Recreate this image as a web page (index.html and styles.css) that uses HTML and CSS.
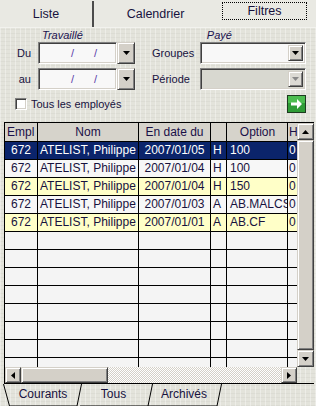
FILE: index.html
```html
<!DOCTYPE html>
<html lang="fr">
<head>
    <meta charset="UTF-8">
    <title>Filtres</title>
    <link rel="stylesheet" href="styles.css">
</head>
<body>
    <div class="tabs">
        <div class="tab tab-liste">Liste</div>
        <div class="tab tab-cal">Calendrier</div>
        <div class="tab tab-filtres"><span class="focus">Filtres</span></div>
    </div>

    <div class="filters">
        <div class="heads">
            <span class="head-work">Travaillé</span>
            <span class="head-paid">Payé</span>
        </div>

        <div class="frow">
            <span class="lbl-left">Du</span>
            <div class="field date"><span class="slash">/</span><span class="slash">/</span></div>
            <div class="btn-drop"><svg width="7" height="4" viewBox="0 0 7 4"><path d="M0 0h7L3.5 4z" fill="#000"/></svg></div>
            <span class="lbl-right">Groupes</span>
            <div class="field combo">
                <div class="btn-drop inner"><svg width="7" height="4" viewBox="0 0 7 4"><path d="M0 0h7L3.5 4z" fill="#000"/></svg></div>
            </div>
        </div>

        <div class="frow">
            <span class="lbl-left">au</span>
            <div class="field date"><span class="slash">/</span><span class="slash">/</span></div>
            <div class="btn-drop"><svg width="7" height="4" viewBox="0 0 7 4"><path d="M0 0h7L3.5 4z" fill="#000"/></svg></div>
            <span class="lbl-right">Période</span>
            <div class="field combo disabled">
                <div class="btn-drop inner"><svg width="7" height="4" viewBox="0 0 7 4"><path d="M0 0h7L3.5 4z" fill="#8a8a8a"/></svg></div>
            </div>
        </div>

        <div class="crow">
            <span class="check"></span>
            <span class="check-text">Tous les employés</span>
            <div class="go">
                <svg width="19" height="18" viewBox="0 0 19 18">
                    <rect x="0.5" y="0.5" width="18" height="17" fill="#2f9c36" stroke="#1d3b1f"/>
                    <rect x="1" y="1" width="17" height="7" fill="#4cbd4f"/>
                    <path d="M4 7.5h6V4l5 5-5 5v-3.5H4z" fill="#fff"/>
                </svg>
            </div>
        </div>
    </div>

    <div class="grid">
        <div class="grid-main">
            <div class="cells">
                <div class="row head">
                    <div class="c c-empl">Empl</div>
                    <div class="c c-nom">Nom</div>
                    <div class="c c-date">En date du</div>
                    <div class="c c-type"></div>
                    <div class="c c-opt">Option</div>
                    <div class="c c-h">H</div>
                </div>
                <div class="row sel">
                    <div class="c c-empl">672</div>
                    <div class="c c-nom">ATELIST, Philippe</div>
                    <div class="c c-date">2007/01/05</div>
                    <div class="c c-type">H</div>
                    <div class="c c-opt">100</div>
                    <div class="c c-h">0</div>
                </div>
                <div class="row">
                    <div class="c c-empl">672</div>
                    <div class="c c-nom">ATELIST, Philippe</div>
                    <div class="c c-date">2007/01/04</div>
                    <div class="c c-type">H</div>
                    <div class="c c-opt">100</div>
                    <div class="c c-h">0</div>
                </div>
                <div class="row alt">
                    <div class="c c-empl">672</div>
                    <div class="c c-nom">ATELIST, Philippe</div>
                    <div class="c c-date">2007/01/04</div>
                    <div class="c c-type">H</div>
                    <div class="c c-opt">150</div>
                    <div class="c c-h">0</div>
                </div>
                <div class="row">
                    <div class="c c-empl">672</div>
                    <div class="c c-nom">ATELIST, Philippe</div>
                    <div class="c c-date">2007/01/03</div>
                    <div class="c c-type">A</div>
                    <div class="c c-opt">AB.MALCS</div>
                    <div class="c c-h">0</div>
                </div>
                <div class="row alt">
                    <div class="c c-empl">672</div>
                    <div class="c c-nom">ATELIST, Philippe</div>
                    <div class="c c-date">2007/01/01</div>
                    <div class="c c-type">A</div>
                    <div class="c c-opt">AB.CF</div>
                    <div class="c c-h">0</div>
                </div>
                <div class="row empty"><div class="c c-empl"></div><div class="c c-nom"></div><div class="c c-date"></div><div class="c c-type"></div><div class="c c-opt"></div><div class="c c-h"></div></div>
                <div class="row empty"><div class="c c-empl"></div><div class="c c-nom"></div><div class="c c-date"></div><div class="c c-type"></div><div class="c c-opt"></div><div class="c c-h"></div></div>
                <div class="row empty"><div class="c c-empl"></div><div class="c c-nom"></div><div class="c c-date"></div><div class="c c-type"></div><div class="c c-opt"></div><div class="c c-h"></div></div>
                <div class="row empty"><div class="c c-empl"></div><div class="c c-nom"></div><div class="c c-date"></div><div class="c c-type"></div><div class="c c-opt"></div><div class="c c-h"></div></div>
                <div class="row empty"><div class="c c-empl"></div><div class="c c-nom"></div><div class="c c-date"></div><div class="c c-type"></div><div class="c c-opt"></div><div class="c c-h"></div></div>
                <div class="row empty"><div class="c c-empl"></div><div class="c c-nom"></div><div class="c c-date"></div><div class="c c-type"></div><div class="c c-opt"></div><div class="c c-h"></div></div>
                <div class="row empty"><div class="c c-empl"></div><div class="c c-nom"></div><div class="c c-date"></div><div class="c c-type"></div><div class="c c-opt"></div><div class="c c-h"></div></div>
                <div class="row empty"><div class="c c-empl"></div><div class="c c-nom"></div><div class="c c-date"></div><div class="c c-type"></div><div class="c c-opt"></div><div class="c c-h"></div></div>
            </div>
            <div class="vscroll">
                <div class="sbtn"><svg width="7" height="4" viewBox="0 0 7 4"><path d="M0 4h7L3.5 0z" fill="#000"/></svg></div>
                <div class="vtrack"></div>
                <div class="sbtn"><svg width="7" height="4" viewBox="0 0 7 4"><path d="M0 0h7L3.5 4z" fill="#000"/></svg></div>
            </div>
        </div>
        <div class="hscroll">
            <div class="hbar">
                <div class="sbtn"><svg width="4" height="7" viewBox="0 0 4 7"><path d="M4 0v7L0 3.5z" fill="#000"/></svg></div>
                <div class="hthumb"></div>
                <div class="htrack"></div>
                <div class="sbtn"><svg width="4" height="7" viewBox="0 0 4 7"><path d="M0 0v7l4-3.5z" fill="#000"/></svg></div>
            </div>
            <div class="corner"></div>
        </div>
    </div>

    <div class="sheets">
        <svg class="sheet-lines" width="316" height="24" viewBox="0 0 316 24">
            <path d="M3.5 0L9.5 22H77L81.5 0" fill="none" stroke="#000"/>
            <path d="M80 22H148L152.5 0" fill="none" stroke="#000"/>
            <path d="M148 22H217L221.5 0" fill="none" stroke="#000"/>
        </svg>
        <span class="sheet s-courants">Courants</span>
        <span class="sheet s-tous">Tous</span>
        <span class="sheet s-archives">Archivés</span>
    </div>
</body>
</html>
```

FILE: styles.css
```css
/* base window */
* {
    box-sizing: border-box;
}

body {
    margin: 0;
    width: 316px;
    height: 406px;
    overflow: hidden;
    font-family: "Liberation Sans", Arial, sans-serif;
    color: #17123e;
    background-color: #e3e3db;
    background-image:
        repeating-linear-gradient(90deg, rgba(255, 255, 255, 0.35) 0 1px, transparent 1px 5px),
        repeating-linear-gradient(0deg, rgba(0, 0, 0, 0.03) 0 1px, transparent 1px 4px);
}

/* top tabs */
.tabs {
    display: flex;
    height: 28px;
    background: #e9e9e3;
    border-bottom: 1px solid #f2f2ee;
}

.tab {
    display: flex;
    align-items: center;
    justify-content: center;
    font-size: 12.5px;
}

.tab-liste {
    width: 94px;
    border-right: 2px solid #4b4b4b;
    margin-top: 1px;
}

.tab-cal {
    width: 123px;
}

.tab-filtres {
    width: 99px;
    justify-content: flex-start;
}

.focus {
    margin-left: 5px;
    width: 85px;
    height: 18px;
    margin-top: -5px;
    border: 1px dotted #000;
    text-align: center;
    line-height: 16px;
    color: #160f3a;
}

/* filters */
.filters {
    height: 91px;
}

.heads {
    height: 14px;
    font-size: 11px;
    font-style: italic;
    line-height: 14px;
    color: #1a1250;
}

.head-work {
    margin-left: 42px;
}

.head-paid {
    margin-left: 121px;
}

.frow {
    display: flex;
    align-items: center;
    height: 22px;
    margin-bottom: 4px;
    font-size: 11px;
}

.lbl-left {
    width: 31px;
    text-align: right;
    margin-right: 7px;
}

.lbl-right {
    width: 48px;
    margin-left: 17px;
}

.field {
    height: 22px;
    background: #f8f8f8;
    border: 1px solid;
    border-color: #808080 #ffffff #ffffff #808080;
    box-shadow: inset 1px 1px 0 #404040, inset -1px -1px 0 #d4d0c8;
}

.date {
    width: 79px;
    display: flex;
    align-items: center;
    padding-left: 32px;
    font-size: 11px;
    color: #5a3aa8;
}

.slash + .slash {
    margin-left: 20px;
}

.btn-drop {
    width: 18px;
    height: 22px;
    display: flex;
    align-items: center;
    justify-content: center;
    background: #d4d0c8;
    border: 1px solid;
    border-color: #d4d0c8 #404040 #404040 #d4d0c8;
    box-shadow: inset 1px 1px 0 #ffffff, inset -1px -1px 0 #808080;
}

.combo {
    width: 106px;
    display: flex;
    justify-content: flex-end;
    padding: 2px;
}

.btn-drop.inner {
    width: 15px;
    height: 16px;
}

.combo.disabled {
    background: #d8d8d0;
}

.combo.disabled .btn-drop {
    background: #dcdad4;
}

.crow {
    display: flex;
    align-items: center;
    height: 19px;
    margin-top: 1px;
    font-size: 11px;
}

.check {
    width: 12px;
    height: 12px;
    margin-left: 15px;
    margin-right: 4px;
    background: #fff;
    border: 1px solid;
    border-color: #808080 #ffffff #ffffff #808080;
    box-shadow: inset 1px 1px 0 #404040, inset -1px -1px 0 #d4d0c8;
}

.check-text {
    flex: 1;
}

.go {
    width: 19px;
    height: 18px;
    margin-right: 10px;
}

.go svg {
    display: block;
}

/* grid */
.grid {
    margin-top: 3px;
    margin-left: 4px;
    width: 310px;
    border-left: 1px solid #000;
    border-top: 1px solid #000;
}

.grid-main {
    display: flex;
    height: 244px;
}

.cells {
    width: 292px;
    overflow: hidden;
    background: #f4f4f4;
}

.row {
    display: grid;
    grid-template-columns: 33px 101px 72px 16px 61px 24px;
    height: 18px;
    border-bottom: 1px solid #000;
    font-size: 12px;
    line-height: 17px;
    background: #f7f7f7;
}

.row.head {
    height: 19px;
    line-height: 18px;
    background: #d6d3cb;
    color: #1a1048;
}

.row.sel {
    background: #0b246b;
    color: #fff;
}

.row.alt {
    background: #ffffc8;
}

.row.empty {
    background: #f4f4f4;
}

.c {
    border-right: 1px solid #000;
    white-space: nowrap;
    overflow: hidden;
    padding: 0 2px;
}

.c-empl {
    text-align: center;
}

.head .c-empl {
    text-align: left;
}

.c-date {
    text-align: center;
}

.head .c-nom,
.head .c-opt {
    text-align: center;
}

.c-opt {
    padding-left: 3px;
    text-overflow: clip;
}

.c-h {
    padding-left: 1px;
}

/* scrollbars */
.vscroll {
    width: 17px;
    display: flex;
    flex-direction: column;
}

.sbtn {
    width: 17px;
    height: 17px;
    flex: none;
    display: flex;
    align-items: center;
    justify-content: center;
    background: #d4d0c8;
    border: 1px solid;
    border-color: #d4d0c8 #404040 #404040 #d4d0c8;
    box-shadow: inset 1px 1px 0 #ffffff, inset -1px -1px 0 #808080;
}

.sbtn svg {
    display: block;
}

.vtrack {
    flex: 1;
    background: #d4d0c8;
    border: 1px solid;
    border-color: #d4d0c8 #404040 #404040 #d4d0c8;
    box-shadow: inset 1px 1px 0 #ffffff, inset -1px -1px 0 #808080;
}

.hscroll {
    display: flex;
    height: 17px;
    border-bottom: 1px solid #000;
}

.hbar {
    width: 292px;
    display: flex;
}

.hbar .sbtn {
    width: 16px;
    height: 16px;
}

.hthumb {
    width: 87px;
    background: #d4d0c8;
    border: 1px solid;
    border-color: #d4d0c8 #404040 #404040 #d4d0c8;
    box-shadow: inset 1px 1px 0 #ffffff, inset -1px -1px 0 #808080;
}

.htrack {
    flex: 1;
    background: repeating-conic-gradient(#ffffff 0 25%, #d4d0c8 0 50%) 0 0 / 2px 2px;
}

.corner {
    width: 17px;
}

/* sheet tabs */
.sheets {
    position: relative;
    display: flex;
    height: 24px;
    font-size: 12px;
    line-height: 21px;
}

.sheet-lines {
    position: absolute;
    left: 0;
    top: 0;
}

.sheet {
    position: relative;
    text-align: center;
}

.s-courants {
    margin-left: 8px;
    width: 70px;
}

.s-tous {
    width: 71px;
}

.s-archives {
    width: 70px;
}
```
